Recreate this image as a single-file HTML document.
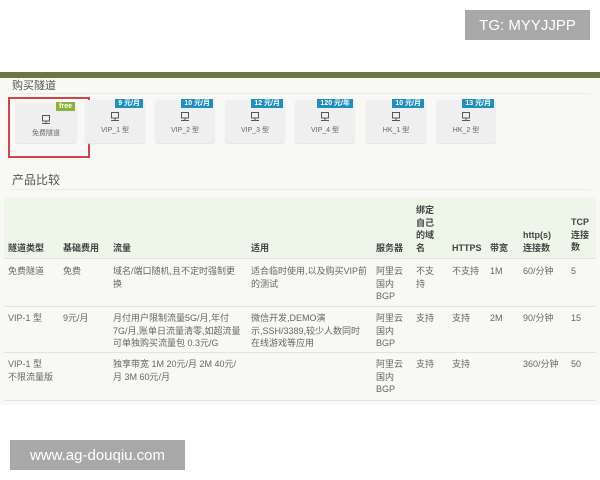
<!DOCTYPE html>
<html><head><meta charset="utf-8"><style>
*{margin:0;padding:0;box-sizing:border-box}
body{width:600px;height:480px;background:#fff;font-family:"Liberation Sans","Noto Sans CJK SC",sans-serif;position:relative;overflow:hidden;color:#555}
.wm{position:absolute;background:#a8a8a8;color:#fff;font-size:15px;display:flex;align-items:center;justify-content:center}
.bar{position:absolute;left:0;top:72px;width:600px;height:6px;background:#6b7743}
.main{position:absolute;left:0;top:78px;width:600px;height:327px;background:#f8f8f6}
.h{position:absolute;font-size:11px;color:#555}
.card{position:absolute;top:100px;width:60px;height:43px;background:#efefef;border-radius:3px;text-align:center;font-size:7px;color:#666;box-shadow:0 1px 1px #e4e4e4}
.card svg{display:block;margin:12px auto 3px}
.badge{position:absolute;top:-1px;right:2px;background:#1f8fc0;color:#fff;font-size:7px;font-weight:bold;padding:0 3px;line-height:9px}
.red{position:absolute;left:8px;top:97px;width:82px;height:61px;border:2px solid #d0454a}
.thead{position:absolute;left:4px;top:198px;width:592px;height:60px;background:#eef5e9}
.t{position:absolute;font-size:9px;line-height:12.5px;color:#666}
.b{font-weight:bold;color:#444}
.ln{position:absolute;left:4px;width:592px;height:1px;background:#e4e4e4}
</style></head><body>
<div class="wm" style="left:465px;top:10px;width:125px;height:30px">TG: MYYJJPP</div>
<div class="bar"></div>
<div class="main"></div>
<div class="h" style="left:12px;top:77px">购买隧道</div>
<div class="ln" style="top:93px;left:10px;width:580px;background:#ebebeb"></div>
<div class="red"></div>
<div class="card" style="left:15px;top:103px;width:62px;height:40px"><span class="badge" style="background:#8cb43c">free</span><svg width="10" height="10" viewBox="0 0 10 10"><rect x="1.5" y="0.5" width="7" height="5.5" fill="none" stroke="#555"/><path d="M5 6v2M1 8.5h8" stroke="#555"/></svg>免费隧道</div>
<div class="card" style="left:85px"><span class="badge">9 元/月</span><svg width="10" height="10" viewBox="0 0 10 10"><rect x="1.5" y="0.5" width="7" height="5.5" fill="none" stroke="#555"/><path d="M5 6v2M1 8.5h8" stroke="#555"/></svg>VIP_1 型</div>
<div class="card" style="left:155px"><span class="badge">10 元/月</span><svg width="10" height="10" viewBox="0 0 10 10"><rect x="1.5" y="0.5" width="7" height="5.5" fill="none" stroke="#555"/><path d="M5 6v2M1 8.5h8" stroke="#555"/></svg>VIP_2 型</div>
<div class="card" style="left:225px"><span class="badge">12 元/月</span><svg width="10" height="10" viewBox="0 0 10 10"><rect x="1.5" y="0.5" width="7" height="5.5" fill="none" stroke="#555"/><path d="M5 6v2M1 8.5h8" stroke="#555"/></svg>VIP_3 型</div>
<div class="card" style="left:295px"><span class="badge">120 元/年</span><svg width="10" height="10" viewBox="0 0 10 10"><rect x="1.5" y="0.5" width="7" height="5.5" fill="none" stroke="#555"/><path d="M5 6v2M1 8.5h8" stroke="#555"/></svg>VIP_4 型</div>
<div class="card" style="left:366px"><span class="badge">10 元/月</span><svg width="10" height="10" viewBox="0 0 10 10"><rect x="1.5" y="0.5" width="7" height="5.5" fill="none" stroke="#555"/><path d="M5 6v2M1 8.5h8" stroke="#555"/></svg>HK_1 型</div>
<div class="card" style="left:436px"><span class="badge">13 元/月</span><svg width="10" height="10" viewBox="0 0 10 10"><rect x="1.5" y="0.5" width="7" height="5.5" fill="none" stroke="#555"/><path d="M5 6v2M1 8.5h8" stroke="#555"/></svg>HK_2 型</div>
<div class="h" style="left:12px;top:171px;font-size:12px">产品比较</div>
<div class="ln" style="top:189px;left:10px;width:580px;background:#ebebeb"></div>
<div class="thead"></div>
<div class="t b" style="left:8px;top:242px">隧道类型</div>
<div class="t b" style="left:63px;top:242px">基础费用</div>
<div class="t b" style="left:113px;top:242px">流量</div>
<div class="t b" style="left:251px;top:242px">适用</div>
<div class="t b" style="left:376px;top:242px">服务器</div>
<div class="t b" style="left:416px;top:204px;width:20px">绑定自己的域名</div>
<div class="t b" style="left:452px;top:242px">HTTPS</div>
<div class="t b" style="left:490px;top:242px">带宽</div>
<div class="t b" style="left:523px;top:229px">http(s)<br>连接数</div>
<div class="t b" style="left:571px;top:216px;width:20px">TCP连接数</div>
<div class="ln" style="top:258px"></div>
<div class="t" style="left:8px;top:265px">免费隧道</div>
<div class="t" style="left:63px;top:265px">免费</div>
<div class="t" style="left:113px;top:265px;width:127px">域名/端口随机,且不定时强制更换</div>
<div class="t" style="left:251px;top:265px;width:120px">适合临时使用,以及购买VIP前的测试</div>
<div class="t" style="left:376px;top:265px;width:30px">阿里云国内BGP</div>
<div class="t" style="left:416px;top:265px;width:20px">不支持</div>
<div class="t" style="left:452px;top:265px">不支持</div>
<div class="t" style="left:490px;top:265px">1M</div>
<div class="t" style="left:523px;top:265px">60/分钟</div>
<div class="t" style="left:571px;top:265px">5</div>
<div class="ln" style="top:306px"></div>
<div class="t" style="left:8px;top:312px">VIP-1 型</div>
<div class="t" style="left:63px;top:312px">9元/月</div>
<div class="t" style="left:113px;top:312px;width:132px">月付用户限制流量5G/月,年付<br>7G/月,账单日流量清零,如超流量<br>可单独购买流量包 0.3元/G</div>
<div class="t" style="left:251px;top:312px;width:122px">微信开发,DEMO演<br>示,SSH/3389,较少人数同时<br>在线游戏等应用</div>
<div class="t" style="left:376px;top:312px;width:30px">阿里云国内BGP</div>
<div class="t" style="left:416px;top:312px">支持</div>
<div class="t" style="left:452px;top:312px">支持</div>
<div class="t" style="left:490px;top:312px">2M</div>
<div class="t" style="left:523px;top:312px">90/分钟</div>
<div class="t" style="left:571px;top:312px">15</div>
<div class="ln" style="top:352px"></div>
<div class="t" style="left:8px;top:358px">VIP-1 型<br>不限流量版</div>
<div class="t" style="left:113px;top:358px;width:132px">独享带宽 1M 20元/月 2M 40元/<br>月 3M 60元/月</div>
<div class="t" style="left:376px;top:358px;width:30px">阿里云国内BGP</div>
<div class="t" style="left:416px;top:358px">支持</div>
<div class="t" style="left:452px;top:358px">支持</div>
<div class="t" style="left:523px;top:358px">360/分钟</div>
<div class="t" style="left:571px;top:358px">50</div>
<div class="ln" style="top:400px"></div>
<div class="wm" style="left:10px;top:440px;width:175px;height:30px">www.ag-douqiu.com</div>
</body></html>
